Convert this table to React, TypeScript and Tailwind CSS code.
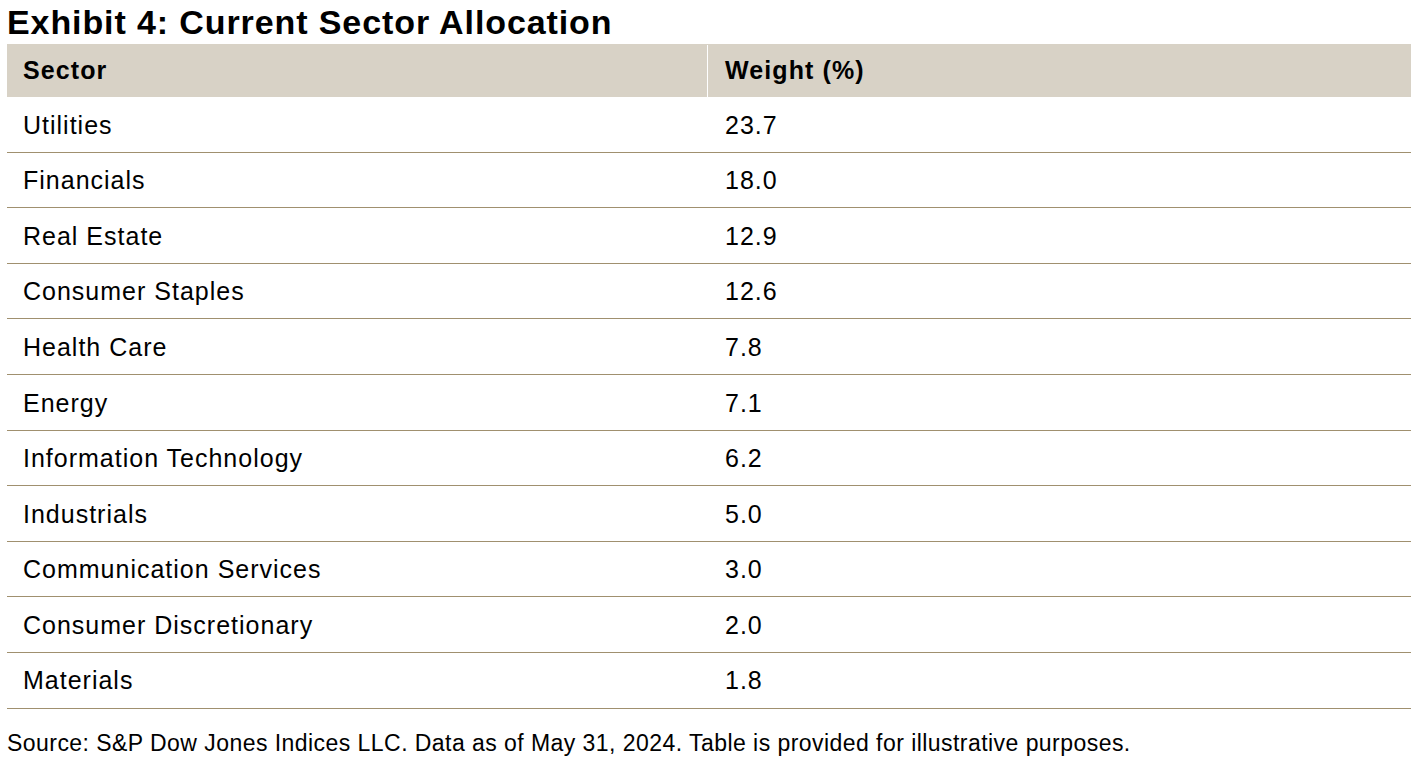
import React from "react";

const rows: [string, string][] = [
  ["Utilities", "23.7"],
  ["Financials", "18.0"],
  ["Real Estate", "12.9"],
  ["Consumer Staples", "12.6"],
  ["Health Care", "7.8"],
  ["Energy", "7.1"],
  ["Information Technology", "6.2"],
  ["Industrials", "5.0"],
  ["Communication Services", "3.0"],
  ["Consumer Discretionary", "2.0"],
  ["Materials", "1.8"],
];

export default function App() {
  return (
    <div
      className="w-[1427px] h-[768px] bg-white text-black overflow-hidden"
      style={{ fontFamily: '"Liberation Sans", Arial, sans-serif' }}
    >
      <h1 className="pl-[7px] h-[44px] text-[34px] font-bold leading-[44px] tracking-[0.9px]">
        Exhibit 4: Current Sector Allocation
      </h1>
      <div className="ml-[7px] w-[1404px]">
        <div className="flex h-[53px] bg-[#d8d2c6] text-[25px] font-bold tracking-[1.1px] pt-[1px]">
          <div className="w-[701px] border-r border-white pl-[16px] flex items-center">Sector</div>
          <div className="flex-1 pl-[17px] flex items-center">Weight (%)</div>
        </div>
        {rows.map(([s, w]) => (
          <div key={s} className="flex h-[55.6px] border-b border-[#a0906f] text-[25px] tracking-[1px] pt-[2px]">
            <div className="w-[701px] pl-[16px] flex items-center">{s}</div>
            <div className="flex-1 pl-[17px] flex items-center">{w}</div>
          </div>
        ))}
      </div>
      <div className="pl-[7px] pt-[22px] text-[23px] leading-[24px] tracking-[0.45px]">
        Source: S&amp;P Dow Jones Indices LLC. Data as of May 31, 2024. Table is provided for illustrative purposes.
      </div>
    </div>
  );
}
